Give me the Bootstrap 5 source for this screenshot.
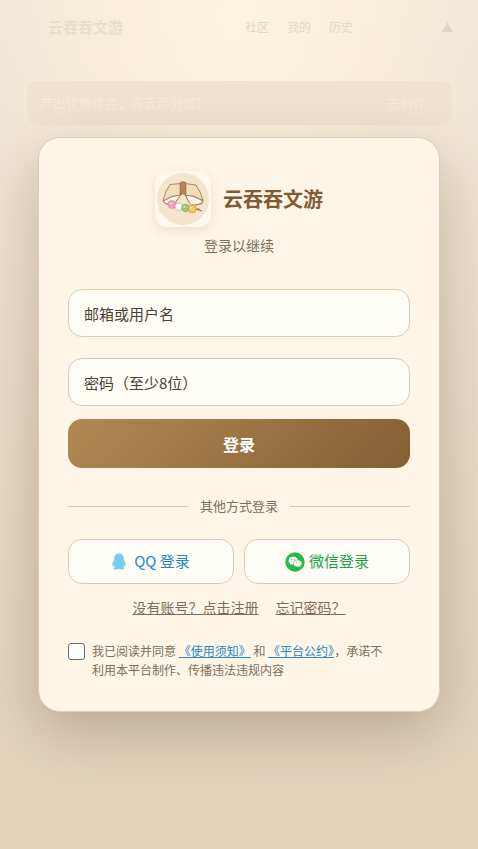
<!DOCTYPE html>
<html lang="zh-CN">
<head>
<meta charset="utf-8">
<meta name="viewport" content="width=device-width, initial-scale=1">
<title>云吞吞文游 - 登录</title>
<link href="https://cdn.jsdelivr.net/npm/bootstrap@5.3.0/dist/css/bootstrap.min.css" rel="stylesheet">
<style>
  body { font-family: "Noto Sans CJK SC", "Noto Sans", sans-serif; font-size: 14px; line-height: 20px; color: #806d59; background: #e5d3bd; }
  .stage { min-height: 100vh; background: radial-gradient(ellipse 56% 38% at 50% 2%, #fdf4e0 0%, rgba(253,243,222,.6) 50%, rgba(250,238,218,0) 100%), linear-gradient(180deg, #f2e8d8 0%, #efe4d2 22%, #e8dac5 55%, #e5d4be 80%, #e5d2ba 100%); }
  .site-head { height: 54px; padding: 0 25px 0 48px; font-size: 12px; }
  .site-head a { color: #e3d8c5; text-decoration: none; }
  .site-head .site-name { color: #e9dec9; font-size: 15px; font-weight: 700; }
  .site-links { gap: 18px; margin-left: 122px; }
  .site-head .to-top { color: #dfd3c1; line-height: 0; }
  .promo { margin: 27px 26px 0 27px; height: 44px; padding: 0 26px 0 13px; border-radius: 10px; background: #efe3cf; color: #f6ecdb; font-size: 13px; }
  .promo a { color: #f6ecdb; text-decoration: none; }
  .overlay { padding: 20px 38px; }
  .panel { padding: 33px 29px 32px; background: #fff6e8; border: 1px solid #dfcdb0; border-radius: 22px; box-shadow: 0 20px 60px rgba(90,65,40,.3); }
  .brand-logo { width: 56px; height: 56px; border-radius: 12px; background: #fff8ef; box-shadow: 0 4px 12px rgba(120,90,50,.14); }
  .brand-name { font-size: 20px; line-height: 28px; font-weight: 700; color: #805b34; }
  .login-fields { margin-top: 34px; gap: 21px; }
  .field { height: 48px; padding: 0 15px; font-size: 15px; color: #4c4234; background: #fffdf6; border: 1px solid #dccbb0; border-radius: 14px; }
  .field::placeholder { color: #4c4234; opacity: 1; }
  .field:focus { background: #fffdf6; border-color: #a98047; box-shadow: 0 0 0 3px rgba(169,128,71,.2); }
  .submit { margin-top: 13px; height: 49px; border: 0; border-radius: 14px; font-size: 16px; font-weight: 700; color: #fff; background: linear-gradient(135deg, #b08953, #845f34); }
  .submit:hover { color: #fff; background: #845b31; }
  .divider { margin-top: 28px; font-size: 13px; }
  .divider::before, .divider::after { content: ""; flex: 1; height: 1px; background: #d9c7ad; }
  .providers { margin-top: 23px; --bs-gutter-x: 10px; }
  .provider { height: 45px; padding: 0; font-size: 15px; background: #fffdf6; border: 1px solid #dccbb0; border-radius: 14px; }
  .provider:hover { background: #fff9ea; border-color: #c9b189; }
  .qq, .qq:hover { color: #2587c9; }
  .wechat, .wechat:hover { color: #18a34a; }
  .aux { margin-top: 13px; gap: 17px; }
  .aux a { color: #806d59; }
  .terms { margin-top: 24px; gap: 7px; font-size: 12px; line-height: 19px; }
  .terms label { padding-right: 18px; }
  .terms a { color: #2587c9; }
  .agree { width: 17px; height: 17px; margin: 2px 0 0; border: 1px solid #6d6d70; border-radius: 3px; background-color: #fff; }
</style>
<script src="https://cdn.jsdelivr.net/npm/bootstrap@5.3.0/dist/js/bootstrap.bundle.min.js"></script>
</head>
<body>
<div class="stage position-relative">
  <header class="site-head d-flex align-items-center">
    <span class="site-name">云吞吞文游</span>
    <nav class="site-links d-flex">
      <a href="#">社区</a><a href="#">我的</a><a href="#">历史</a>
    </nav>
    <a class="to-top ms-auto" href="#" aria-label="顶部"><svg width="11" height="10" viewBox="0 0 11 10" fill="currentColor"><path d="M5.5 0 11 10H0z"/></svg></a>
  </header>
  <div class="promo d-flex align-items-center justify-content-between">
    <span>产出优质作品，得云币分成！</span><a href="#">去创作</a>
  </div>

  <div class="overlay position-absolute top-0 start-0 w-100 h-100 d-flex align-items-center">
    <main class="panel w-100">
      <div class="d-flex align-items-center justify-content-center">
        <svg class="brand-logo flex-shrink-0" viewBox="0 0 56 56" aria-hidden="true">
          <circle cx="28" cy="28" r="26" fill="#f4e6cd"/>
          <path d="M8 30Q17 25 26 23L20 33 11 33zM30 23Q39 25 48 30L45 33Q39 35 35 33z" fill="#fff7ec" stroke="#ab8564" stroke-width=".8" stroke-linejoin="round"/>
          <path d="M26 12.500 15 13.500Q10 20 8 30Q16 24 26 24z" fill="#f3dcb9" stroke="#98704f" stroke-width=".8" stroke-linejoin="round"/>
          <path d="M30 12.500 41 14Q46 21 48 29.500Q40 24 30 24z" fill="#f3dcb9" stroke="#98704f" stroke-width=".8" stroke-linejoin="round"/>
          <path d="M8 30 10 32.500 13 33M48 29.500 46.500 33 40 34" fill="none" stroke="#98704f" stroke-width=".9"/>
          <path d="M25.200 11.500Q28 10 30.800 11.500V23.500Q28 22 25.200 23.500z" fill="#b98059" stroke="#8b6042" stroke-width=".7"/>
          <path d="M26 24 20.500 30.500M30 24 34.500 32" stroke="#a9805e" stroke-width=".8"/>
          <path d="M40 37.500 43 38.500 44 37.500M43 38.500 46.500 40" stroke="#8f6847" stroke-width="1.100" fill="none"/>
          <circle cx="17" cy="33.500" r="4" fill="#ee9fbd" stroke="#bd8585" stroke-width=".6"/>
          <circle cx="23.800" cy="35.700" r="3.800" fill="#fffaf4" stroke="#b9a28a" stroke-width=".6"/>
          <circle cx="30.500" cy="37" r="3.800" fill="#9acb6f" stroke="#7e9763" stroke-width=".6"/>
          <circle cx="37.300" cy="38" r="3.900" fill="#f4cb57" stroke="#b38b4d" stroke-width=".6"/>
          <g fill="#fff" opacity=".6"><circle cx="15.800" cy="32.300" r="1.100"/><circle cx="29.300" cy="35.800" r="1"/><circle cx="36" cy="36.800" r="1"/></g>
        </svg>
        <h1 class="brand-name mb-0 ms-2 ps-1">云吞吞文游</h1>
      </div>
      <p class="text-center mt-2 mb-0">登录以继续</p>

      <form>
        <div class="login-fields d-grid">
          <input class="field form-control" type="text" placeholder="邮箱或用户名" aria-label="邮箱或用户名">
          <input class="field form-control" type="password" placeholder="密码（至少8位）" aria-label="密码（至少8位）">
        </div>
        <button class="submit btn w-100" type="submit">登录</button>

        <div class="divider d-flex align-items-center"><span class="px-2 mx-1">其他方式登录</span></div>

        <div class="providers row">
          <div class="col">
            <button type="button" class="provider qq btn w-100 d-flex align-items-center justify-content-center gap-2">
              <svg width="14" height="17" viewBox="0 0 14 17" aria-hidden="true"><path fill="#73cef0" d="M7 .5C3.900.5 2.200 2.700 2.300 5.700L1.800 8C.8 9.500 0 11.500.3 12.700c.2.8.9.2 1.500-.8.2 1 .6 1.800 1.200 2.400-1 .3-1.500.8-1.300 1.400.3.9 3.800.9 5.300.1 1.500.8 5 .8 5.300-.1.2-.6-.3-1.100-1.300-1.400.6-.6 1-1.400 1.200-2.400.6 1 1.300 1.600 1.500.8.3-1.200-.5-3.200-1.500-4.700l-.5-2.300C11.800 2.700 10.100.5 7 .5z"/></svg>
              <span>QQ 登录</span>
            </button>
          </div>
          <div class="col">
            <button type="button" class="provider wechat btn w-100 d-flex align-items-center justify-content-center">
              <svg class="me-1" width="20" height="20" viewBox="0 0 20 20" aria-hidden="true"><circle cx="10" cy="10" r="9.700" fill="#2bb84a"/><path fill="#fff" d="M8.300 4.700C5.600 4.700 3.500 6.400 3.500 8.600c0 1.200.7 2.200 1.700 2.900l-.4 1.600 1.800-.9 1.700.3c2.700 0 4.800-1.700 4.800-3.900S11 4.700 8.300 4.700z"/><path fill="#fff" stroke="#2bb84a" stroke-width=".6" d="M12.600 8c-2.400 0-4.300 1.500-4.300 3.500S10.200 15 12.600 15l1.300-.2 1.500.8-.3-1.400c1.100-.7 1.800-1.600 1.800-2.700C16.900 9.500 15 8 12.600 8z"/><g fill="#2bb84a"><circle cx="6.700" cy="7.600" r=".6"/><circle cx="9.900" cy="7.600" r=".6"/><circle cx="11.300" cy="10.700" r=".5"/><circle cx="14" cy="10.700" r=".5"/></g></svg>
              <span>微信登录</span>
            </button>
          </div>
        </div>

        <div class="aux d-flex justify-content-center"><a href="#">没有账号？点击注册</a><a href="#">忘记密码？</a></div>

        <div class="terms d-flex align-items-start">
          <input class="agree form-check-input flex-shrink-0" type="checkbox" id="agree">
          <label for="agree">我已阅读并同意 <a href="#">《使用须知》</a> 和 <a href="#">《平台公约》</a>，承诺不利用本平台制作、传播违法违规内容</label>
        </div>
      </form>
    </main>
  </div>
</div>
</body>
</html>
